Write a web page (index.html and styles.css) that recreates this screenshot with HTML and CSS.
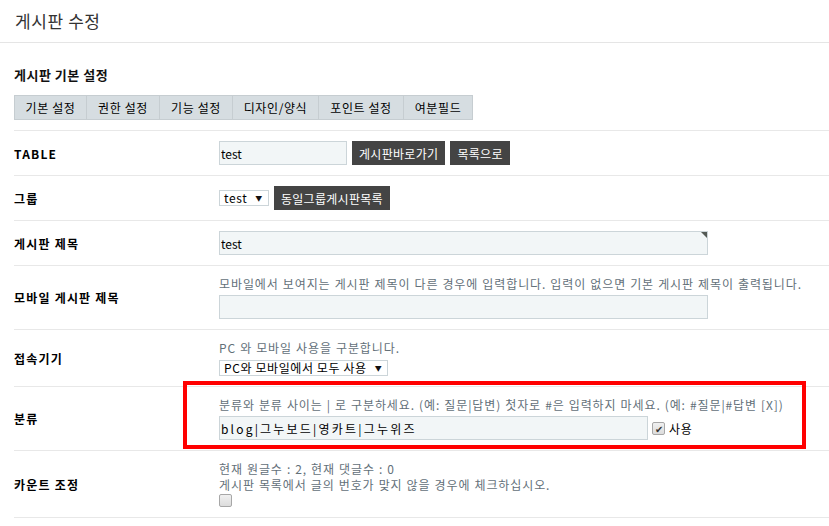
FILE: index.html
```
<!DOCTYPE html>
<html>

<head>
  <title>게시판 수정</title>
  <link rel="stylesheet" href="styles.css">
</head>

<body>

  <div class="heading">
    <h1>게시판 수정</h1>
  </div>

  <div class="main">
    <h2>게시판 기본 설정</h2>

    <ul class="tabs">
      <li>기본 설정</li>
      <li>권한 설정</li>
      <li>기능 설정</li>
      <li>디자인/양식</li>
      <li>포인트 설정</li>
      <li>여분필드</li>
    </ul>

    <div class="form">
      <div class="row">
        <div class="label">TABLE</div>
        <div class="value inline">
          <input class="text short" value="test" />
          <button class="btn">게시판바로가기</button>
          <button class="btn">목록으로</button>
        </div>
      </div>

      <div class="row">
        <div class="label">그룹</div>
        <div class="value inline">
          <span class="select">test <i>▼</i></span>
          <button class="btn">동일그룹게시판목록</button>
        </div>
      </div>

      <div class="row">
        <div class="label">게시판 제목</div>
        <div class="value">
          <span class="required"><input class="text wide" value="test" /></span>
        </div>
      </div>

      <div class="row">
        <div class="label">모바일 게시판 제목</div>
        <div class="value">
          <p class="help">모바일에서 보여지는 게시판 제목이 다른 경우에 입력합니다. 입력이 없으면 기본 게시판 제목이 출력됩니다.</p>
          <input class="text wide" value="" />
        </div>
      </div>

      <div class="row">
        <div class="label">접속기기</div>
        <div class="value">
          <p class="help">PC 와 모바일 사용을 구분합니다.</p>
          <span class="select">PC와 모바일에서 모두 사용 <i>▼</i></span>
        </div>
      </div>

      <div class="row">
        <div class="label">분류</div>
        <div class="value marked">
          <p class="help">분류와 분류 사이는 | 로 구분하세요. (예: 질문|답변) 첫자로 #은 입력하지 마세요. (예: #질문|#답변 [X])</p>
          <div class="inline">
            <input class="text cat" value="blog|그누보드|영카트|그누위즈" />
            <label class="check"><span class="box on">✔</span>사용</label>
          </div>
          <div class="highlight"></div>
        </div>
      </div>

      <div class="row">
        <div class="label">카운트 조정</div>
        <div class="value">
          <p class="help tight">현재 원글수 : 2, 현재 댓글수 : 0<br />게시판 목록에서 글의 번호가 맞지 않을 경우에 체크하십시오.</p>
          <span class="box"></span>
        </div>
      </div>
    </div>
  </div>

</body>

</html>
```

FILE: styles.css
```
body { margin: 0; font-family: "Noto Sans CJK KR", "Noto Sans", sans-serif; font-size: 12px; color: #000; background: #fff; }

.heading { height: 43px; border-bottom: 1px solid #e5e5e5; padding-left: 15px; box-sizing: border-box; }
.heading h1 { margin: 0; font-size: 17px; font-weight: normal; line-height: 42px; color: #333; letter-spacing: 0.6px; }

.main { padding-left: 14px; }
.main h2 { margin: 22px 0 0; font-size: 13px; line-height: 20px; font-weight: bold; color: #111; letter-spacing: 0.5px; }

.tabs { list-style: none; margin: 10px 0 10px; padding: 0; display: flex; }
.tabs li { height: 25px; line-height: 23px; box-sizing: border-box; padding: 0; text-align: center; white-space: nowrap; background: #d6dde1; border: 1px solid #c6cdd1; border-left: none; letter-spacing: 0.6px; }
.tabs li:first-child { border-left: 1px solid #c6cdd1; }
.tabs li:nth-child(1) { width: 73px; }
.tabs li:nth-child(2) { width: 73px; }
.tabs li:nth-child(3) { width: 73px; }
.tabs li:nth-child(4) { width: 86px; }
.tabs li:nth-child(5) { width: 85px; }
.tabs li:nth-child(6) { width: 69px; }

.form { border-top: 1px solid #e8e8e8; }
.row { display: grid; grid-template-columns: 205px 1fr; border-bottom: 1px solid #e8e8e8; }
.label { display: flex; align-items: center; font-weight: bold; font-size: 12px; color: #000; letter-spacing: 1.2px; }
.value { padding: 10px 0; position: relative; }
.inline { display: flex; align-items: center; gap: 5px; }

.text { height: 24px; box-sizing: border-box; border: 1px solid #ccd5d9; background: #f2f6f7; font-family: inherit; font-size: 12px; padding: 0 1px; margin: 0; color: #000; outline: none; display: block; }
.short { width: 128px; }
.wide { width: 489px; }
.cat { width: 429px; letter-spacing: 2.2px; }

.btn { height: 24px; border: none; background: #444; color: #fff; font-family: inherit; font-size: 12px; padding: 0 7px; margin: 0; letter-spacing: 0.3px; }

.select { display: inline-flex; align-items: center; height: 16px; box-sizing: border-box; border: 1px solid #ccd5d9; background: #fff; padding: 0 5px 0 4px; font-size: 12px; line-height: 14px; gap: 8px; letter-spacing: 0.6px; }
.select i { font-style: normal; font-size: 7px; color: #111; }

.required { display: inline-block; position: relative; }
.required::after { content: ""; position: absolute; top: 1px; right: 1px; border-top: 6px solid #555a55; border-left: 6px solid transparent; }

.help { margin: 0 0 3px; line-height: 16px; color: #637079; letter-spacing: 0.9px; word-spacing: 0.5px; }
.help.tight { line-height: 16px; margin-bottom: 1px; }

.check { display: flex; align-items: center; gap: 4px; margin-left: -1px; letter-spacing: 0.6px; }
.box { display: block; width: 13px; height: 13px; box-sizing: border-box; border: 1px solid #a7a7a7; border-radius: 2px; background: linear-gradient(#f0f0f0, #dcdcdc); font-size: 10px; line-height: 11px; text-align: center; color: #333; letter-spacing: 0; }

.highlight { position: absolute; left: -36px; top: -6px; width: 623px; height: 68px; box-sizing: border-box; border: 4px solid #f00; pointer-events: none; }
```
